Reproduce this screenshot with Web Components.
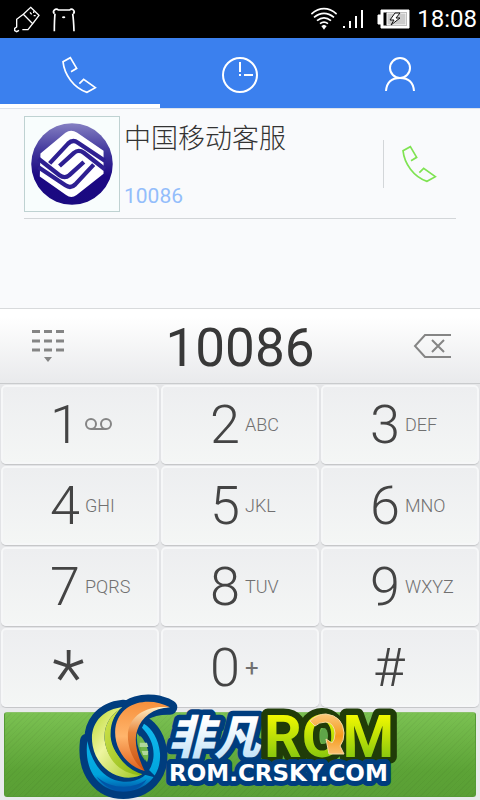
<!DOCTYPE html>
<html lang="zh-CN">
<head>
<meta charset="utf-8">
<meta name="viewport" content="width=device-width, initial-scale=1">
<title>Dialer</title>
<style>
body {
  margin: 0;
  background: #f9fafc;
  font-family: Roboto, "Noto Sans CJK SC", sans-serif;
}
</style>
</head>
<body>
<dialer-app></dialer-app>

<script>
// base class: clones the markup of each element into its shadow root
class DialerElement extends HTMLElement {
  constructor() {
    super();
    const template = document.createElement('template');
    template.innerHTML = this.constructor.markup;
    this.attachShadow({ mode: 'open' });
    this.shadowRoot.appendChild(template.content.cloneNode(true));
  }
}

const PHONE_PATH = 'M214 213 L231 203 L212 171 L190 183 C194 222 222 262 262 275 L287 261 L252 236 L239 249';

class StatusBar extends DialerElement {
  static get markup() {
    return `
<style>
:host {
  display: flex;
  align-items: center;
  justify-content: space-between;
  height: 38px;
  padding: 0 3px 0 13px;
  background: #000;
  color: #fff;
  font-size: 24px;
  line-height: 38px;
}
.group {
  display: flex;
  align-items: center;
  gap: 10px;
}
.right {
  gap: 6px;
}
svg {
  display: block;
  fill: none;
  stroke: #fff;
}
</style>
<div class="group">
  <svg width="28" height="28" viewBox="39 14 84 84" stroke-width="4">
    <path d="M92 21 L117 45 L98 70 L70 42 Z M70 42 L50 57 V80 L44 84 V91 L50 94 L57 90 M98 70 L84 88 H67"/>
    <path d="M90 36 l5 6 M101 33 v5 M101 46 h6"/>
  </svg>
  <svg width="26" height="28" viewBox="150 14 78 84" stroke-width="5">
    <path d="M160 40 A7 7 0 1 1 172 29 H206 A7 7 0 1 1 217 40 M162 40 Q160 60 160 93 M215 40 Q218 60 219 93"/>
    <ellipse cx="188" cy="51" rx="5" ry="3" fill="#fff" stroke="none"/>
  </svg>
</div>
<div class="group right">
  <svg width="26" height="24" viewBox="216 21 78 72" stroke-width="5">
    <path d="M217 42 Q255 10 293 42 M225 52 Q255 28 285 52 M234 62 Q255 45 276 62 M243 71 Q255 62 267 71"/>
    <path d="M247 78 L255 74 L263 78 L255 89 Z" fill="#fff" stroke="none"/>
  </svg>
  <svg width="20" height="20" viewBox="0 0 20 20" stroke-width="2">
    <path d="M1 19 v-2 M7 19 v-7 M13 19 v-12 M19 19 v-18"/>
  </svg>
  <svg width="42" height="20" viewBox="-9 0 42 20" stroke="none">
    <path d="M0 6 h3 v-5 h28 v18 h-28 v-4 h-3 z" fill="#fff"/>
    <path d="M5 3 h24 v14 h-24 z" fill="#000"/>
    <path d="M9 4 h19 v12 h-19 z" fill="#ccc"/>
    <path d="M17 4 l-5 7 h4 l-3 5 l9 -7 h-4 l4 -5 z" fill="#fff" stroke="#111"/>
  </svg>
  <span>18:08</span>
</div>`;
  }
}

class TabBar extends DialerElement {
  static get markup() {
    return `
<style>
:host {
  display: grid;
  grid-template-columns: repeat(3, 1fr);
  background: #3b80ee;
  border-bottom: 1px solid #dde3ec;
}
button {
  display: flex;
  align-items: center;
  justify-content: center;
  height: 70px;
  margin: 0;
  padding: 4px 0 0;
  border: 0;
  background: none;
}
button[aria-selected="true"] {
  box-shadow: inset 0 -4px #fff;
}
svg {
  fill: none;
  stroke: #fff;
  stroke-width: 2px;
}
.phone {
  stroke-width: 5px;
}
</style>
<button aria-label="拨号" role="tab" aria-selected="true">
  <svg class="phone" width="36" height="38" viewBox="187 166 108 114"><path d="${PHONE_PATH}"/></svg>
</button>
<button aria-label="通话记录" role="tab">
  <svg width="36" height="36" viewBox="0 0 36 36"><circle cx="18" cy="18" r="17"/><path d="M18 5 v10 M17 18 h2 M22 18 h9"/></svg>
</button>
<button aria-label="联系人" role="tab">
  <svg width="34" height="36" viewBox="0 0 34 36"><circle cx="17" cy="11" r="10"/><path d="M3 34 Q4 21 17 21 Q30 21 31 34"/></svg>
</button>`;
  }
}

class ContactRow extends DialerElement {
  static get markup() {
    return `
<style>
:host {
  display: flex;
  align-items: center;
  margin: 0 24px;
  padding: 7px 0 6px;
  border-bottom: 1px solid #d3d6d9;
}
.avatar {
  box-sizing: border-box;
  width: 96px;
  height: 96px;
  border: 1px solid #bfd2d2;
  background: #f8fdfd;
}
.text {
  flex: 1;
  display: flex;
  flex-direction: column;
  justify-content: space-between;
  height: 92px;
  padding-left: 4px;
}
.name {
  color: #333;
  font-family: "Noto Sans CJK SC", sans-serif;
  font-size: 27px;
  font-weight: 300;
  line-height: 38px;
}
.number {
  color: #93bdfb;
  font-size: 21px;
  line-height: 28px;
}
button {
  display: flex;
  align-items: center;
  justify-content: center;
  width: 73px;
  height: 48px;
  padding: 0;
  border: 0;
  border-left: 1px solid #d3d6d9;
  background: none;
}
button svg {
  fill: none;
  stroke: #7fe352;
  stroke-width: 5px;
}
</style>
<svg class="avatar" viewBox="73 49 286 286">
  <defs>
    <linearGradient id="ball" x1="0" y1="0" x2="0" y2="1">
      <stop offset="0" stop-color="#8580c2"/>
      <stop offset=".35" stop-color="#40359c"/>
      <stop offset=".65" stop-color="#1c0883"/>
      <stop offset="1" stop-color="#1a0a80"/>
    </linearGradient>
  </defs>
  <circle cx="216" cy="192" r="124" fill="url(#ball)"/>
  <path fill="#fff" d="M120 160 L196 97 Q213 85 232 97 L312 152 V222 L230 286 Q214 299 198 286 L118 230 Z"/>
  <g fill="none" stroke="#2e1f92" stroke-width="13" stroke-linejoin="round">
    <path d="M148 190 L204 130 Q218 116 234 127 L316 182"/>
    <path d="M178 198 L222 158 Q236 146 252 158 L316 208"/>
    <path d="M282 194 L226 254 Q212 268 196 257 L114 202"/>
    <path d="M252 186 L208 226 Q194 238 178 226 L114 176"/>
  </g>
</svg>
<div class="text">
  <span class="name"><slot></slot></span>
  <span class="number"><slot name="number"></slot></span>
</div>
<button aria-label="呼叫">
  <svg width="36" height="38" viewBox="187 166 108 114"><path d="${PHONE_PATH}"/></svg>
</button>`;
  }
}

class NumberBar extends DialerElement {
  static get markup() {
    return `
<style>
:host {
  display: flex;
  align-items: center;
  box-sizing: border-box;
  height: 76px;
  padding: 0 28px;
  border-top: 1px solid #d8dadc;
  border-bottom: 1px solid #c9cbcd;
  background: linear-gradient(#fff 10%, #e9eaec);
}
button {
  display: flex;
  padding: 0;
  border: 0;
  background: none;
}
input {
  flex: 1;
  min-width: 0;
  height: 70px;
  padding: 4px 0 0;
  border: 0;
  outline: 0;
  background: none;
  color: #383838;
  font-family: Roboto, sans-serif;
  font-size: 53px;
  text-align: center;
}
</style>
<button aria-label="收起键盘">
  <svg width="40" height="32" viewBox="0 0 40 32">
    <path d="M4 1.5 h32 M4 11 h32 M4 20 h32" stroke="#858585" stroke-width="3" stroke-dasharray="8 4"/>
    <path d="M16 27 h8 l-4 5 z" fill="#858585"/>
  </svg>
</button>
<input type="tel" value="10086" aria-label="号码">
<button aria-label="删除">
  <svg width="40" height="26" viewBox="0 0 40 26" fill="none" stroke="#858585" stroke-width="2">
    <path d="M39 2 H13 L3 13 L13 24 H39 M20 7 L32 19 M32 7 L20 19"/>
  </svg>
</button>`;
  }
}

class DialKey extends DialerElement {
  static get markup() {
    return `
<style>
:host {
  display: block;
}
button {
  display: grid;
  grid-template-columns: 50% 1fr;
  align-items: center;
  gap: 5px;
  box-sizing: border-box;
  width: 100%;
  height: 79px;
  padding: 0;
  border: 2px solid #f6f7f8;
  border-radius: 5px;
  background: linear-gradient(#edeef0, #f4f6f5);
  box-shadow: 0 1px 1px #c2c4c6;
  font-family: Roboto, sans-serif;
  text-align: left;
}
.digit {
  color: #444;
  font-size: 54px;
  font-weight: 300;
  line-height: 72px;
  text-align: right;
}
.letters {
  color: #707070;
  font-size: 18px;
  font-weight: 300;
  line-height: 24px;
}
:host([symbol="star"]) .digit {
  padding-top: 20px;
  font-size: 76px;
  line-height: 36px;
}
:host([symbol="star"]) button,
:host([symbol="hash"]) button {
  grid-template-columns: 53% 1fr;
}
:host([symbol="plus"]) .letters {
  font-size: 24px;
  font-weight: 400;
}
</style>
<button>
  <span class="digit"></span>
  <span class="letters"><slot></slot></span>
</button>`;
  }

  connectedCallback() {
    this.shadowRoot.querySelector('.digit').textContent = this.getAttribute('digit');
  }
}

class DialPad extends DialerElement {
  static get markup() {
    return `
<style>
:host {
  display: grid;
  grid-template-columns: repeat(3, 1fr);
  gap: 2px;
  padding: 1px;
  background: #e6e7e9;
}
svg {
  display: block;
}
</style>
<dial-key digit="1">
  <svg width="28" height="14" viewBox="0 0 28 14" fill="none" stroke="#858585" stroke-width="2">
    <circle cx="6" cy="6" r="5"/><circle cx="21" cy="6" r="5"/><path d="M6 11 h15"/>
  </svg>
</dial-key>
<dial-key digit="2">ABC</dial-key>
<dial-key digit="3">DEF</dial-key>
<dial-key digit="4">GHI</dial-key>
<dial-key digit="5">JKL</dial-key>
<dial-key digit="6">MNO</dial-key>
<dial-key digit="7">PQRS</dial-key>
<dial-key digit="8">TUV</dial-key>
<dial-key digit="9">WXYZ</dial-key>
<dial-key digit="*" symbol="star"></dial-key>
<dial-key digit="0" symbol="plus">+</dial-key>
<dial-key digit="#" symbol="hash"></dial-key>`;
  }
}

class RomBadge extends DialerElement {
  static get markup() {
    return `
<style>
:host {
  display: block;
}
svg {
  display: block;
  overflow: visible;
}
text {
  paint-order: stroke;
  stroke-linejoin: round;
}
.cn {
  font: italic 900 46px "Noto Sans CJK SC", sans-serif;
  fill: url(#ice);
  stroke: #003d7e;
  stroke-width: 11px;
}
.rom {
  font: 700 59px Roboto, sans-serif;
  fill: url(#lime);
  stroke: #203c08;
  stroke-width: 13px;
}
.site {
  font: 700 23px "DejaVu Sans", sans-serif;
  fill: #fff;
  stroke: #003d7e;
  stroke-width: 10px;
}
</style>
<svg width="326" height="106" viewBox="77 693 326 106">
  <defs>
    <linearGradient id="ice" x1="0" y1="0" x2="0" y2="1">
      <stop offset=".3" stop-color="#fff"/><stop offset="1" stop-color="#b5dcf6"/>
    </linearGradient>
    <linearGradient id="lime" x1="0" y1="0" x2="0" y2="1">
      <stop offset=".2" stop-color="#f0f800"/><stop offset=".9" stop-color="#78c010"/>
    </linearGradient>
    <linearGradient id="sea" x1="0" y1="0" x2="0" y2="1">
      <stop offset="0" stop-color="#12b9f0"/><stop offset=".75" stop-color="#00a4dc"/><stop offset="1" stop-color="#0050a4"/>
    </linearGradient>
    <linearGradient id="leaf" x1="0" y1="0" x2="1" y2="1">
      <stop offset="0" stop-color="#b8d82c"/><stop offset=".4" stop-color="#eef5a0"/><stop offset="1" stop-color="#9cc61a"/>
    </linearGradient>
    <linearGradient id="leaf2" x1="0" y1="0" x2="1" y2="1">
      <stop offset="0" stop-color="#d4e650"/><stop offset="1" stop-color="#86b410"/>
    </linearGradient>
    <linearGradient id="sun" x1="0" y1="0" x2="0" y2="1">
      <stop offset="0" stop-color="#f7903c"/><stop offset=".5" stop-color="#ffb56c"/><stop offset="1" stop-color="#e0601c"/>
    </linearGradient>
    <linearGradient id="sun2" x1="0" y1="0" x2="0" y2="1">
      <stop offset="0" stop-color="#fff0c8"/><stop offset=".4" stop-color="#e8863c"/><stop offset="1" stop-color="#c84e10"/>
    </linearGradient>
    <linearGradient id="gold" x1="0" y1="0" x2="0" y2="1">
      <stop offset="0" stop-color="#fbc878"/><stop offset=".55" stop-color="#f59a1c"/><stop offset="1" stop-color="#fbc070"/>
    </linearGradient>
  </defs>

  <!-- swirl, drawn at three units to the pixel -->
  <g transform="translate(0 685) scale(.3333)">
    <g fill="#003d7e" stroke="#003d7e" stroke-width="44" stroke-linejoin="round">
      <path d="M262 168 C250 262 302 320 370 320 C440 318 484 270 480 205 C476 160 455 130 432 116 L426 128 C452 155 464 185 460 220 C452 272 415 293 370 290 C316 286 276 242 262 168 Z"/>
      <path d="M370 66 C305 72 266 120 278 182 C290 245 345 285 400 277 Q425 273 434 260 C375 262 322 232 314 165 C310 118 335 85 370 66 Z"/>
      <path d="M510 67 C450 34 358 48 346 130 C340 190 380 244 434 258 C400 225 383 180 390 140 C400 95 445 65 510 67 Z"/>
    </g>
    <path d="M330 120 L380 240 L434 262 L350 285 L280 210 Z" fill="#003d7e"/>
    <path fill="url(#sea)" d="M262 168 C250 262 302 320 370 320 C440 318 484 270 480 205 C476 160 455 130 432 116 L426 128 C452 155 464 185 460 220 C452 272 415 293 370 290 C316 286 276 242 262 168 Z"/>
    <path fill="#0055a8" d="M290 275 C330 312 400 315 440 283 C415 332 325 330 290 275 Z"/>
    <path fill="url(#leaf)" d="M370 66 C305 72 266 120 278 182 C290 245 345 285 400 277 Q425 273 434 260 C375 262 322 232 314 165 C310 118 335 85 370 66 Z"/>
    <path fill="url(#leaf2)" d="M370 66 C335 85 310 118 314 165 C322 232 370 268 420 270 L434 258 C380 248 336 205 332 155 C330 112 345 85 370 66 Z"/>
    <path fill="url(#sun)" stroke="#003d7e" stroke-width="22" paint-order="stroke" d="M510 67 C450 34 358 48 346 130 C340 190 380 244 434 258 C400 225 383 180 390 140 C400 95 445 65 510 67 Z"/>
    <path fill="url(#sun2)" d="M510 67 C440 60 392 90 384 142 C380 190 405 238 434 258 C408 205 402 165 412 135 C425 95 460 70 510 67 Z"/>
    <path fill="#6fb64b" d="M421 152 C445 178 450 212 441 232 C425 205 416 178 421 152 Z"/>
    <path fill="#b0d89c" d="M419 173 h22 l4 13 h-26 z M425 198 h20 l-2 12 h-14 z"/>
  </g>

  <text class="cn" x="168" y="754">非凡</text>
  <text class="rom" x="264" y="757">ROM</text>
  <ellipse cx="324" cy="736" rx="4" ry="8" fill="#5fa548"/>
  <path d="M310 721 Q317 714 326 714 Q343 716 344 733 Q344 741 340 746 L344 754 L329 754 L326 739 L332 743 Q335 740 335 733 Q334 723 326 722 Q319 722 315 726 Z" fill="url(#gold)" stroke="#f6d9a0"/>
  <text class="site" x="169" y="781">ROM.CRSKY.COM</text>
</svg>`;
  }
}

class CallBar extends DialerElement {
  static get markup() {
    return `
<style>
:host {
  display: flex;
  justify-content: center;
  position: relative;
  padding: 4px 4px 3px;
  background: #e9eaec;
}
button {
  flex: 1;
  height: 85px;
  border: 1px solid #559a35;
  border-top-color: #8ac268;
  border-radius: 3px;
  background:
    repeating-linear-gradient(135deg, rgba(0, 0, 0, .03) 0 1px, transparent 1px 4px),
    linear-gradient(#7bc152, #5ca336 70%, #5a9f35);
}
/* the badge lies over the button and the last row of keys */
.badge {
  position: absolute;
  bottom: 1px;
}
</style>
<button aria-label="拨打"></button>
<div class="badge"><slot></slot></div>`;
  }
}

class DialerApp extends DialerElement {
  static get markup() {
    return `
<style>
:host {
  display: flex;
  flex-direction: column;
  min-height: 100vh;
}
main {
  flex: 1;
}
</style>
<status-bar></status-bar>
<tab-bar></tab-bar>
<main>
  <contact-row>中国移动客服<span slot="number">10086</span></contact-row>
</main>
<number-bar></number-bar>
<dial-pad></dial-pad>
<call-bar><rom-badge></rom-badge></call-bar>`;
  }
}

customElements.define('status-bar', StatusBar);
customElements.define('tab-bar', TabBar);
customElements.define('contact-row', ContactRow);
customElements.define('number-bar', NumberBar);
customElements.define('dial-key', DialKey);
customElements.define('dial-pad', DialPad);
customElements.define('rom-badge', RomBadge);
customElements.define('call-bar', CallBar);
customElements.define('dialer-app', DialerApp);
</script>
</body>
</html>
